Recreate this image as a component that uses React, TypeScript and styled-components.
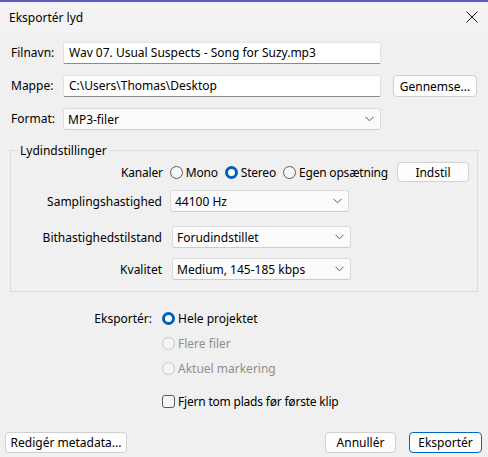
import React from "react";
import styled, { createGlobalStyle } from "styled-components";

const GlobalStyle = createGlobalStyle`
  html, body {
    margin: 0;
    padding: 0;
    background: #f0f0f0;
  }
  body {
    font-family: "Noto Sans", "Liberation Sans", sans-serif;
    font-size: 12px;
    color: #000000;
  }
`;

type RadioProps = {
  checked?: boolean;
  disabled?: boolean;
};

const Radio: React.FC<RadioProps & { label: string }> = (props) => {
  const { checked = false, disabled = false, label } = props;
  return (
    <RadioLabel $disabled={disabled}>
      <RadioDot $checked={checked} $disabled={disabled} />
      {label}
    </RadioLabel>
  );
};

const Chevron = () => (
  <svg width="9" height="6" viewBox="0 0 9 6">
    <path d="M0.5 0.8 L4.5 4.8 L8.5 0.8" fill="none" stroke="#5a5a5a" strokeWidth="1" />
  </svg>
);

const Combo: React.FC<{ value: string; width: number }> = ({ value, width }) => (
  <Select style={{ width }}>
    <span>{value}</span>
    <Chevron />
  </Select>
);

export default function App() {
  return (
    <>
      <GlobalStyle />
      <Window>
        <TopStrip />
        <TitleBar>
          <span>Eksportér lyd</span>
          <svg width="12" height="12" viewBox="0 0 12 12">
            <path d="M0.5 0.5 L11.5 11.5 M11.5 0.5 L0.5 11.5" stroke="#1a1a1a" strokeWidth="1" />
          </svg>
        </TitleBar>

        <FileGrid>
          <FieldLabel>Filnavn:</FieldLabel>
          <TextInput>Wav 07. Usual Suspects - Song for Suzy.mp3</TextInput>
          <span />

          <FieldLabel>Mappe:</FieldLabel>
          <TextInput>C:\Users\Thomas\Desktop</TextInput>
          <Button $width={84}>Gennemse...</Button>

          <FieldLabel>Format:</FieldLabel>
          <Combo value="MP3-filer" width={318} />
          <span />
        </FileGrid>

        <Group>
          <Legend>Lydindstillinger</Legend>
          <ChannelRow>
            <RightLabel>Kanaler</RightLabel>
            <Radio label="Mono" />
            <Radio label="Stereo" checked />
            <Radio label="Egen opsætning" />
            <Button $width={72} $height={20}>Indstil</Button>
          </ChannelRow>
          <SettingRow $top={8} $indent={8}>
            <RightLabel>Samplingshastighed</RightLabel>
            <Combo value="44100 Hz" width={179} />
          </SettingRow>
          <SettingRow $top={14} $indent={10}>
            <RightLabel>Bithastighedstilstand</RightLabel>
            <Combo value="Forudindstillet" width={179} />
          </SettingRow>
          <SettingRow $top={10} $indent={10}>
            <RightLabel>Kvalitet</RightLabel>
            <Combo value="Medium, 145-185 kbps" width={179} />
          </SettingRow>
        </Group>

        <ExportGrid>
          <RightLabel>Eksportér:</RightLabel>
          <Radio label="Hele projektet" checked />
          <span />
          <Radio label="Flere filer" disabled />
          <span />
          <Radio label="Aktuel markering" disabled />
          <span />
          <CheckRow>
            <CheckBox />
            Fjern tom plads før første klip
          </CheckRow>
        </ExportGrid>

        <Footer>
          <Button $width={122}>Redigér metadata...</Button>
          <FooterRight>
            <Button $width={71}>Annullér</Button>
            <Button $width={73} $primary>
              Eksportér
            </Button>
          </FooterRight>
        </Footer>
      </Window>
    </>
  );
}

const Window = styled.div`
  width: 488px;
  height: 457px;
  display: flex;
  flex-direction: column;
`;

const TopStrip = styled.div`
  height: 2px;
  background: #5c5cc0;
`;

const TitleBar = styled.div`
  height: 30px;
  display: flex;
  align-items: center;
  justify-content: space-between;
  padding: 0 10px 0 9px;
  font-size: 12px;
  background: #f3f3f3;
`;

const FileGrid = styled.div`
  margin-top: 10px;
  padding-left: 11px;
  display: grid;
  grid-template-columns: 52px 318px auto;
  column-gap: 0;
  row-gap: 11px;
  align-items: center;

  & > button {
    margin-left: 12px;
  }
`;

const FieldLabel = styled.span`
  line-height: 22px;
`;

const TextInput = styled.div`
  height: 22px;
  box-sizing: border-box;
  background: #ffffff;
  border: 1px solid #e3e3e3;
  border-bottom-color: #8a8a8a;
  border-radius: 2px;
  padding: 0 6px 0 5px;
  line-height: 20px;
  white-space: nowrap;
  overflow: hidden;
`;

const Select = styled.div`
  height: 22px;
  box-sizing: border-box;
  background: #fbfbfb;
  border: 1px solid #dcdcdc;
  border-bottom-color: #cccccc;
  border-radius: 3px;
  padding: 0 6px 0 4px;
  display: flex;
  align-items: center;
  justify-content: space-between;
  white-space: nowrap;
`;

const Button = styled.button<{ $width: number; $height?: number; $primary?: boolean }>`
  width: ${(p) => p.$width}px;
  height: ${(p) => p.$height ?? 22}px;
  box-sizing: border-box;
  background: #fdfdfd;
  border: 1px solid ${(p) => (p.$primary ? "#0067c0" : "#d0d0d0")};
  border-radius: 4px;
  font-family: inherit;
  font-size: 12px;
  color: #000000;
  padding: 0;
`;

const Group = styled.div`
  position: relative;
  margin: 20px 10px 0 10px;
  border: 1px solid #dcdcdc;
  padding: 11px 0 11px 0;
`;

const Legend = styled.span`
  position: absolute;
  top: -9px;
  left: 7px;
  padding: 0 2px;
  background: #f0f0f0;
`;

const RightLabel = styled.span`
  text-align: right;
`;

const ChannelRow = styled.div`
  display: flex;
  align-items: center;
  height: 20px;
  padding-left: 110px;
  gap: 7px;
  letter-spacing: -0.2px;

  & > button {
    margin-left: 2px;
    letter-spacing: 0;
  }
`;

const SettingRow = styled.div<{ $top: number; $indent: number }>`
  margin-top: ${(p) => p.$top}px;
  display: grid;
  grid-template-columns: 151px auto;
  column-gap: ${(p) => p.$indent}px;
  align-items: center;
`;

const RadioLabel = styled.label<{ $disabled: boolean }>`
  display: inline-flex;
  align-items: center;
  gap: 3px;
  color: ${(p) => (p.$disabled ? "#8f8f8f" : "#000000")};
  white-space: nowrap;
`;

const RadioDot = styled.span<{ $checked: boolean; $disabled: boolean }>`
  width: 13px;
  height: 13px;
  box-sizing: border-box;
  border-radius: 50%;
  border: ${(p) =>
    p.$checked ? "3.5px solid #005fb8" : `1px solid ${p.$disabled ? "#c6c6c6" : "#5c5c5c"}`};
  background: ${(p) => (p.$checked ? "#ffffff" : p.$disabled ? "#f5f5f5" : "#f7f7f7")};
`;

const ExportGrid = styled.div`
  margin-top: 14px;
  display: grid;
  grid-template-columns: 152px auto;
  column-gap: 10px;
  grid-auto-rows: 25px;
  align-items: center;

  & > *:last-child {
    margin-top: 16px;
  }
`;

const CheckRow = styled.label`
  display: inline-flex;
  align-items: center;
  gap: 3px;
  letter-spacing: -0.2px;
`;

const CheckBox = styled.span`
  width: 13px;
  height: 13px;
  box-sizing: border-box;
  border: 1px solid #5c5c5c;
  border-radius: 3px;
  background: #f7f7f7;
`;

const Footer = styled.div`
  margin-top: auto;
  margin-bottom: 4px;
  padding: 0 6px 0 5px;
  display: flex;
  justify-content: space-between;
  align-items: center;

  & button {
    height: 21px;
  }
`;

const FooterRight = styled.div`
  display: flex;
  gap: 13px;
`;
